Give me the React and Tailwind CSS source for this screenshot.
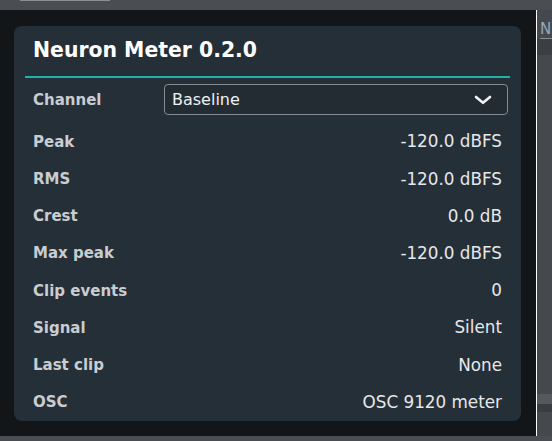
import React from "react";

const readings = [
  { label: "Peak", value: "-120.0 dBFS" },
  { label: "RMS", value: "-120.0 dBFS" },
  { label: "Crest", value: "0.0 dB" },
  { label: "Max peak", value: "-120.0 dBFS" },
  { label: "Clip events", value: "0" },
  { label: "Signal", value: "Silent" },
  { label: "Last clip", value: "None" },
  { label: "OSC", value: "OSC 9120 meter" },
];

function ChannelSelect({ value }) {
  return (
    <div className="flex-1 h-[31px] flex items-center justify-between pl-[7px] pr-[15px] rounded-[4px] border border-[#858b91] bg-[#232c33]">
      <span className="text-[16px] leading-none text-[#eef0f2]">{value}</span>
      <svg width="18" height="10" viewBox="0 0 18 10" fill="none">
        <path
          d="M2 2 L9 7.8 L16 2"
          stroke="#f2f4f5"
          strokeWidth="2.6"
          strokeLinecap="round"
          strokeLinejoin="round"
        />
      </svg>
    </div>
  );
}

function MeterCard() {
  return (
    <div className="w-[507px] h-[395px] rounded-[8px] bg-[#252f37] flex flex-col">
      <h1 className="pt-[12px] px-[19px] text-[20.4px] leading-[24px] font-bold text-white">
        Neuron Meter 0.2.0
      </h1>
      <div className="mt-[14px] mx-[11px] h-[2.5px] bg-[#1fb3a6]" />

      {/* channel picker */}
      <div className="flex items-center pl-[19px] pr-[13px] pt-[6px] pb-[8px]">
        <span className="w-[131px] text-[15px] font-bold text-[#c9cdd1]">Channel</span>
        <ChannelSelect value="Baseline" />
      </div>

      {readings.map((row) => (
        <div key={row.label} className="h-[37.4px] flex items-center justify-between px-[19px]">
          <span className="text-[15px] font-bold text-[#c9cdd1]">{row.label}</span>
          <span className="text-[16.8px] text-[#e6e8eb]">{row.value}</span>
        </div>
      ))}
    </div>
  );
}

export default function App() {
  return (
    <div className="w-[552px] h-[441px] flex flex-col overflow-hidden bg-[#46494d] font-['DejaVu_Sans',sans-serif]">
      {/* host toolbar edge */}
      <div className="h-[10px] shrink-0 bg-[#4a4d51] pl-[20px]">
        <div className="w-[90px] h-[1px] bg-[#8b8e92]" />
      </div>

      <div className="flex-1 flex min-h-0">
        <div className="w-[536px] shrink-0 bg-[#131618] pt-[16px] pl-[14px]">
          <MeterCard />
        </div>
        <div className="w-px bg-white" />
        {/* neighbouring panel, mostly off-screen */}
        <div className="flex-1 overflow-hidden bg-[#45484c] flex flex-col">
          <div className="mt-[10px] pl-[3px] text-[15px] leading-[18px] text-[#93a8bd]">N</div>
          <div className="ml-[3px] h-px bg-[#8a8e93]" />
          <div className="h-[16px] bg-[#3b3e42]" />
          <div className="flex-1" />
          <div className="h-[10px] bg-[#55585c]" />
          <div className="h-[8px] bg-[#393c40]" />
          <div className="h-[24px]" />
        </div>
      </div>

      <div className="h-[5px] shrink-0 bg-[#4a4d51]" />
    </div>
  );
}
